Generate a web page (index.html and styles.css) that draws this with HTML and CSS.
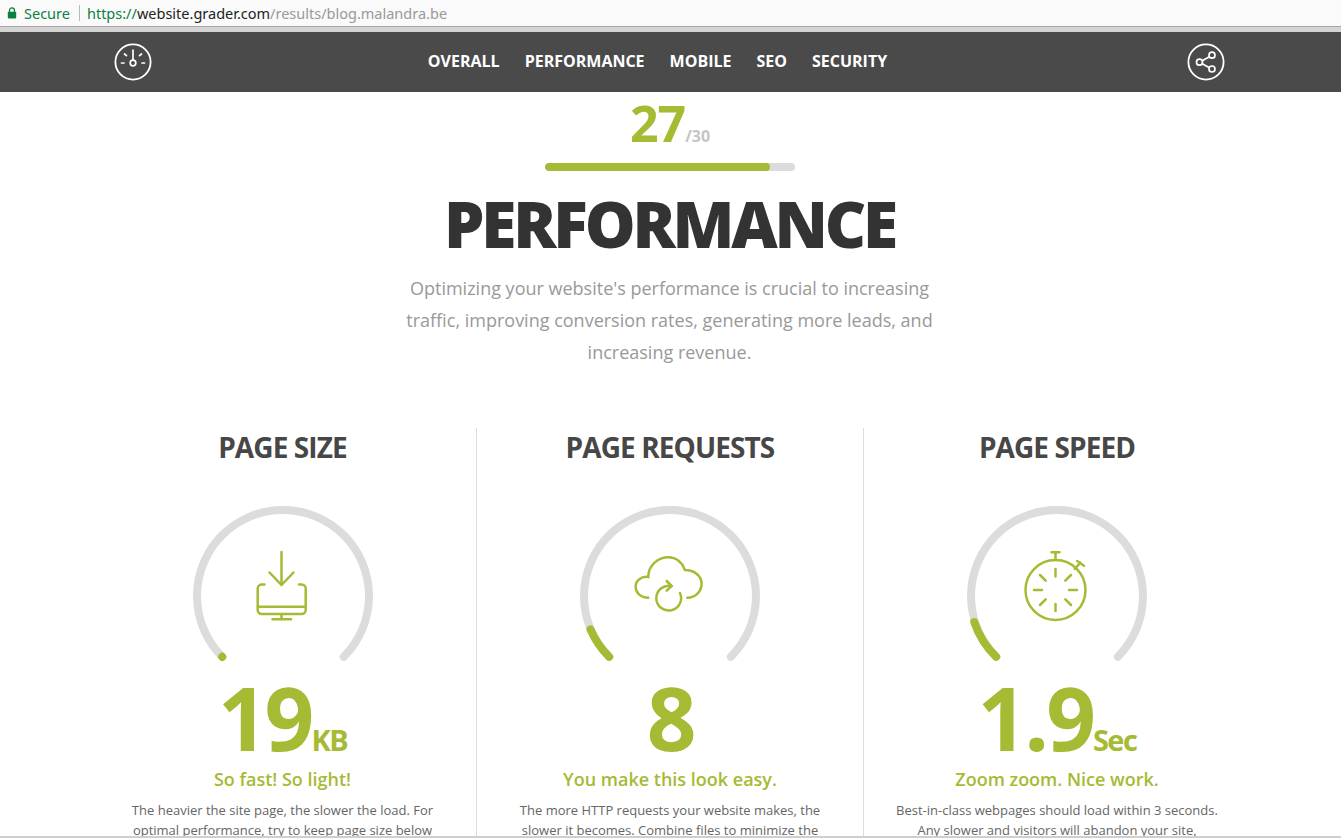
FILE: index.html
```html
<!DOCTYPE html>
<html lang="en">
<head>
<meta charset="utf-8">
<title>Website Grader - Performance</title>
<link rel="stylesheet" href="styles.css">
</head>
<body>
<div class="browser-bar">
  <svg class="lock" viewBox="0 0 10 12" width="10" height="12"><path d="M2.5 5V3.4a2.5 2.5 0 0 1 5 0V5" fill="none" stroke="#0b8043" stroke-width="1.3"/><rect x="0.8" y="4.8" width="8.4" height="6.6" rx="0.8" fill="#0b8043"/></svg>
  <span class="secure">Secure</span>
  <span class="divider"></span>
  <span class="url"><span class="scheme">https://</span><span class="host">website.grader.com</span><span class="path">/results/blog.malandra.be</span></span>
</div>
<div class="browser-edge"></div>
<nav class="topnav">
  <svg class="nav-icon" viewBox="0 0 38 38" width="38" height="38" fill="none" stroke="#fff" stroke-linecap="round">
    <circle cx="19" cy="19" r="17.6" stroke-width="1.8"/>
    <circle cx="19" cy="20" r="2.8" stroke-width="1.7"/>
    <path d="M19 17.2V7M7.5 20h2.5M28 20h2.5M10.5 11l2 1.6M27.5 11l-2 1.6" stroke-width="1.7"/>
  </svg>
  <div class="nav-links">
    <a>OVERALL</a><a>PERFORMANCE</a><a>MOBILE</a><a>SEO</a><a>SECURITY</a>
  </div>
  <svg class="nav-icon" viewBox="0 0 38 38" width="38" height="38" fill="none" stroke="#fff">
    <circle cx="19" cy="19" r="17.6" stroke-width="1.8"/>
    <circle cx="12.5" cy="19.2" r="3" stroke-width="1.7"/>
    <circle cx="25" cy="12.2" r="3" stroke-width="1.7"/>
    <circle cx="25" cy="26" r="3" stroke-width="1.7"/>
    <path d="M15.2 17.7l7.2-4M15.2 20.7l7.2 4" stroke-width="1.7"/>
  </svg>
</nav>
<main class="page">
  <div class="score"><span class="score-value">27</span><span class="score-max">/30</span></div>
  <div class="score-bar"><div class="score-fill"></div></div>
  <h1 class="title">PERFORMANCE</h1>
  <p class="intro">Optimizing your website's performance is crucial to increasing traffic, improving conversion rates, generating more leads, and increasing revenue.</p>
  <section class="metrics">
    <article class="metric">
      <h2 class="metric-title">PAGE SIZE</h2>
      <svg class="gauge" viewBox="0 0 180 180" width="180" height="180" fill="none" stroke-linecap="round">
        <path class="track" d="M29.2 150.8A86 86 0 1 1 150.8 150.8"/>
        <path class="prog" d="M29.2 150.8L29.3 150.9"/>
        <g class="icon">
          <path d="M88.5 46V79M76.5 66.5L88.5 79L100.5 66.5"/>
          <path d="M71.5 78.5H68.5A4 4 0 0 0 64.7 82.5V104A4 4 0 0 0 68.7 108H108.7A4 4 0 0 0 112.7 104V82.5A4 4 0 0 0 108.7 78.5H106"/>
          <path d="M65 100.7H112.5M88.5 108.5V113.3M79.5 113.3H98"/>
        </g>
      </svg>
      <div class="metric-value">19<span class="unit">KB</span></div>
      <div class="metric-label">So fast! So light!</div>
      <p class="metric-text">The heavier the site page, the slower the load. For optimal performance, try to keep page size below</p>
    </article>
    <article class="metric">
      <h2 class="metric-title">PAGE REQUESTS</h2>
      <svg class="gauge" viewBox="0 0 180 180" width="180" height="180" fill="none" stroke-linecap="round">
        <path class="track" d="M29.2 150.8A86 86 0 1 1 150.8 150.8"/>
        <path class="prog" d="M29.2 150.8A86 86 0 0 1 10.5 123.5"/>
        <g class="icon">
          <path d="M68.3 91.7C60.3 91.7 55.6 86.5 55.6 80.7C55.6 74.5 61.3 70 68.3 71C68.3 59 78.3 51.3 88.3 51.3C96.3 51.3 102.3 56.5 105 64C114.3 64 121.6 70 121.6 77.5C121.6 85.5 115.3 91.7 107.3 91.7"/>
          <path d="M91.3 80A12.4 12.4 0 1 0 100 87"/>
          <path d="M86.7 75L91.7 80L86.7 84.7"/>
        </g>
      </svg>
      <div class="metric-value">8</div>
      <div class="metric-label">You make this look easy.</div>
      <p class="metric-text">The more HTTP requests your website makes, the slower it becomes. Combine files to minimize the</p>
    </article>
    <article class="metric">
      <h2 class="metric-title">PAGE SPEED</h2>
      <svg class="gauge" viewBox="0 0 180 180" width="180" height="180" fill="none" stroke-linecap="round">
        <path class="track" d="M29.2 150.8A86 86 0 1 1 150.8 150.8"/>
        <path class="prog" d="M29.2 150.8A86 86 0 0 1 7.2 116"/>
        <g class="icon">
          <circle cx="88.5" cy="84" r="30"/>
          <path d="M88.5 54V46.5M84.5 46.2H92.5M107.7 63L113.4 56.7M110.2 55L117 59.7"/>
          <path d="M88.5 63V70.5M88.5 98V105M67 84H75M102 84H110M73 69L78.7 74.7M104 69L98.3 74.7M73 99L78.7 93.3M104 99L98.3 93.3"/>
        </g>
      </svg>
      <div class="metric-value">1.9<span class="unit">Sec</span></div>
      <div class="metric-label">Zoom zoom. Nice work.</div>
      <p class="metric-text">Best-in-class webpages should load within 3 seconds. Any slower and visitors will abandon your site,</p>
    </article>
  </section>
</main>
<div class="window-edge"></div>
</body>
</html>
```
FILE: styles.css
```css
* { box-sizing: border-box; }
html, body { margin: 0; height: 838px; overflow: hidden; background: #fff; }
body { font-family: "Open Sans", "Liberation Sans", sans-serif; position: relative; }

.browser-bar {
  height: 26px; display: flex; align-items: center; padding-left: 7px;
  background: #fafafa; font-family: "Noto Sans", "Open Sans", sans-serif; font-size: 14.5px;
}
.lock { flex: none; }
.secure { color: #0b8043; margin-left: 7px; }
.divider { width: 1px; height: 16px; background: #bbb; margin: 0 7px 0 9px; }
.scheme { color: #0b8043; }
.host { color: #222; }
.path { color: #999; }
.browser-edge { height: 6px; background: #d4d4d4; border-top: 1px solid #a8a8a8; }

.topnav {
  height: 60px; background: #4a4a4a; display: flex; align-items: center;
  justify-content: space-between; padding: 0 116px 0 114px;
}
.nav-links { display: flex; gap: 25px; margin-right: 24px; margin-bottom: 2px; }
.nav-links a { color: #fff; font-weight: 700; font-size: 16px; line-height: 22px; }

.page { display: flex; flex-direction: column; align-items: center; padding-right: 2px; }
.score { display: flex; align-items: baseline; height: 62px; color: #a6ba33; }
.score-value { font-size: 50px; font-weight: 700; line-height: 62px; letter-spacing: -1px; margin-left: 1px; }
.score-max { font-size: 16px; font-weight: 700; color: #c4c4c4; }
.score-bar { width: 250px; height: 8px; border-radius: 4px; background: #dcdcdc; margin-top: 9px; overflow: hidden; }
.score-fill { width: 90%; height: 100%; border-radius: 4px; background: #a6ba33; }
.title { margin: 17px 0 0; font-size: 64px; line-height: 72px; font-weight: 800; color: #333; letter-spacing: -3.2px; }
.intro { margin: 12px 0 0; width: 540px; text-align: center; font-size: 18px; line-height: 32px; color: #999; }

.metrics { display: grid; grid-template-columns: repeat(3, 387px); width: 1161px; margin-top: 60px; }
.metric { display: flex; flex-direction: column; align-items: center; height: 420px; border-left: 1px solid #ddd; }
.metric:first-child { border-left: 0; }
.metric-title { margin: 0; font-size: 28px; line-height: 38px; font-weight: 700; color: #474747; letter-spacing: -.9px; }
.gauge { margin-top: 40px; flex: none; }
.track { stroke: #dcdcdc; stroke-width: 8; }
.prog { stroke: #a6ba33; stroke-width: 8; }
.icon { stroke: #a6ba33; stroke-width: 2.5; }
.metric-value { margin-top: -14px; font-size: 87px; line-height: 90px; font-weight: 700; color: #a6ba33; letter-spacing: -3px; white-space: nowrap; }
.unit { font-size: 29px; line-height: 1; letter-spacing: -1.5px; }
.metric-label { font-size: 18px; line-height: 24px; margin-top: 5px; font-weight: 600; color: #a6ba33; }
.metric-text { margin: 9px 0 0; width: 330px; text-align: center; font-size: 13px; line-height: 20px; color: #666; }
.window-edge { position: absolute; left: 0; right: 0; bottom: 0; height: 2px; background: #cfcfcf; }
```
